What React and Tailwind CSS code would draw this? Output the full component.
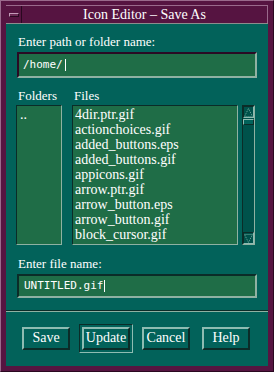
import React from 'react';

const files = [
  '4dir.ptr.gif',
  'actionchoices.gif',
  'added_buttons.eps',
  'added_buttons.gif',
  'appicons.gif',
  'arrow.ptr.gif',
  'arrow_button.eps',
  'arrow_button.gif',
  'block_cursor.gif',
];

const serif = { fontFamily: '"Liberation Serif", "DejaVu Serif", serif' };
const mono = { fontFamily: '"DejaVu Sans Mono", "Liberation Mono", monospace' };

// raised motif push button
const MotifButton = ({ label, isDefault }) => {
  const btn = (
    <div
      className="w-[48px] h-[23px] flex items-center justify-center bg-[#02625a] border-2 border-t-[#8ebcb2] border-l-[#8ebcb2] border-b-[#0b2c28] border-r-[#0b2c28] text-white text-[14px] leading-none"
      style={serif}
    >
      {label}
    </div>
  );
  if (!isDefault) return btn;
  return (
    <div className="p-[2px] border border-t-[#0b2c28] border-l-[#0b2c28] border-b-[#8ebcb2] border-r-[#8ebcb2] -m-[3px]">
      {btn}
    </div>
  );
};

const ScrollArrow = ({ up }) => (
  <div className="h-[12px] border border-t-[#0b2c28] border-l-[#0b2c28] border-b-[#8ebcb2] border-r-[#8ebcb2] flex items-center justify-center">
    <svg width="9" height="9" viewBox="0 0 9 9">
      {up ? (
        <path d="M4.5 0.5 L8.5 8.5 L0.5 8.5 Z" fill="none" stroke="#6fa89c" strokeWidth="1" strokeDasharray="1 1" />
      ) : (
        <path d="M0.5 0.5 L8.5 0.5 L4.5 8.5 Z" fill="none" stroke="#6fa89c" strokeWidth="1" strokeDasharray="1 1" />
      )}
    </svg>
  </div>
);

export default function App() {
  return (
    <div className="w-[274px] h-[372px] bg-[#561441] border-l border-t border-l-[#9a6a8c] border-t-[#9a6a8c] border-r border-b border-r-[#2a0820] border-b-[#2a0820] pl-[5px] pr-[5px] pt-[4px] pb-[5px] flex flex-col overflow-hidden">
      {/* title bar */}
      <div className="h-[18px] flex border-t border-t-[#9a6a8c] border-r border-r-[#9a6a8c]">
        <div className="w-[16px] h-full flex items-center justify-center border-r border-r-[#2a0820]">
          <div className="w-[10px] h-[4px] bg-[#6a2a55] border border-t-[#c49ab8] border-l-[#c49ab8] border-b-[#2a0820] border-r-[#2a0820]" />
        </div>
        <div className="flex-1 flex items-center justify-center text-white text-[14px] leading-none" style={serif}>
          Icon Editor – Save As
        </div>
      </div>

      {/* client area */}
      <div className="flex-1 bg-[#02625a] border-t border-t-[#8d8d8d] flex flex-col">
        <div className="px-[12px]">
          <div className="pt-[11px] text-white text-[13px] leading-[14px]" style={serif}>
            Enter path or folder name:
          </div>
          <div className="mt-[3px] mx-[-1px] h-[26px] border-2 border-t-[#2a0a24] border-l-[#2a0a24] border-b-[#8fb1a2] border-r-[#8fb1a2] bg-[#1f6d47] flex items-center px-[4px] text-white text-[11px]" style={mono}>
            /home/<span className="inline-block w-[1px] h-[12px] bg-white ml-[2px]" />
          </div>

          <div className="mt-[11px] flex text-white text-[13px] leading-[14px]" style={serif}>
            <div className="w-[56px]">Folders</div>
            <div>Files</div>
          </div>

          <div className="mt-[2px] flex h-[140px] gap-[4px]">
            <div className="w-[46px] -ml-[2px] border border-t-[#0b2c28] border-l-[#0b2c28] border-b-[#8fb1a2] border-r-[#8fb1a2] bg-[#1f6d47] text-white text-[14px] leading-[15px] px-[3px] pt-[1px]" style={serif}>
              ..
            </div>
            <div className="ml-[6px] w-[166px] border border-t-[#0b2c28] border-l-[#0b2c28] border-b-[#8fb1a2] border-r-[#8fb1a2] bg-[#1f6d47] text-white text-[14px] leading-[15px] px-[2px] pt-[1px]" style={serif}>
              {files.map((f) => (
                <div key={f} className="whitespace-nowrap">{f}</div>
              ))}
            </div>
            <div className="w-[13px] flex flex-col border border-t-[#0b2c28] border-l-[#0b2c28] border-b-[#8fb1a2] border-r-[#8fb1a2] bg-[#00524b]">
              <ScrollArrow up />
              <div className="h-[6px] mt-[1px] border border-t-[#8ebcb2] border-l-[#8ebcb2] border-b-[#0b2c28] border-r-[#0b2c28] bg-[#02625a]" />
              <div className="flex-1" />
              <ScrollArrow />
            </div>
          </div>

          <div className="mt-[12px] text-white text-[13px] leading-[14px]" style={serif}>
            Enter file name:
          </div>
          <div className="mt-[3px] mx-[-1px] h-[24px] border-2 border-t-[#0b2c28] border-l-[#0b2c28] border-b-[#8fb1a2] border-r-[#8fb1a2] bg-[#1f6d47] flex items-center px-[5px] text-white text-[11px]" style={mono}>
            UNTITLED.gif<span className="inline-block w-[1px] h-[12px] bg-white ml-[1px]" />
          </div>
        </div>

        <div className="mt-[12px] border-t border-t-[#0b2c28] border-b border-b-[#8fb1a2]" />

        <div className="flex-1 flex items-center px-[16px] gap-[12px] pb-[2px]">
          <MotifButton label="Save" />
          <MotifButton label="Update" isDefault />
          <MotifButton label="Cancel" />
          <MotifButton label="Help" />
        </div>
      </div>
    </div>
  );
}
